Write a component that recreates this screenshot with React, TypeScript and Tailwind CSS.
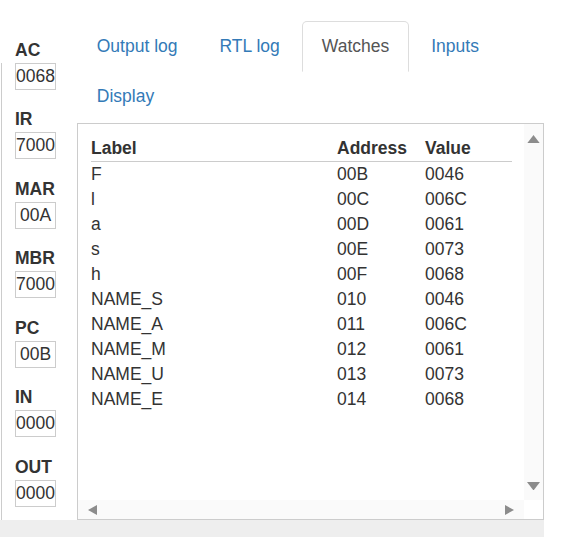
import React from "react"

const registers = [
  { name: "AC", value: "0068" },
  { name: "IR", value: "7000" },
  { name: "MAR", value: "00A" },
  { name: "MBR", value: "7000" },
  { name: "PC", value: "00B" },
  { name: "IN", value: "0000" },
  { name: "OUT", value: "0000" },
]

const tabs = ["Output log", "RTL log", "Watches", "Inputs", "Display"]

const watches = [
  ["F", "00B", "0046"],
  ["l", "00C", "006C"],
  ["a", "00D", "0061"],
  ["s", "00E", "0073"],
  ["h", "00F", "0068"],
  ["NAME_S", "010", "0046"],
  ["NAME_A", "011", "006C"],
  ["NAME_M", "012", "0061"],
  ["NAME_U", "013", "0073"],
  ["NAME_E", "014", "0068"],
]

function RegBox({ value }: { value: string }) {
  return (
    <div className="w-[41px] h-[27px] border border-[#cccccc] flex items-center justify-center leading-[25px]">
      {value}
    </div>
  )
}

function Arrow({ dir }: { dir: "up" | "down" | "left" | "right" }) {
  const pts = {
    up: "6.5,0 13,8.5 0,8.5",
    down: "0,0 13,0 6.5,8.5",
    left: "9,0 9,10 0,5",
    right: "0,0 9,5 0,10",
  }[dir]
  const vertical = dir === "up" || dir === "down"
  return (
    <svg width={vertical ? 13 : 9} height={vertical ? 8.5 : 10} viewBox={vertical ? "0 0 13 8.5" : "0 0 9 10"}>
      <polygon points={pts} fill="#8c8c8c" />
    </svg>
  )
}

export default function App() {
  return (
    <div
      className="w-[585px] h-[537px] bg-white text-[#333333] text-[17.5px] leading-[25px] flex flex-col"
      style={{ fontFamily: '"Liberation Sans", Arial, sans-serif' }}
    >
      <div className="flex h-[520px]">
        {/* registers */}
        <div className="w-[77px] flex flex-col pt-[37.7px]">
          <div className="pl-[15px] h-[25px] font-bold">{registers[0].name}</div>
          <div className="flex-1 ml-[1px] border-l border-[#cccccc] pl-[13px]">
            <RegBox value={registers[0].value} />
            {registers.slice(1).map((r) => (
              <div key={r.name} className="mt-[17.5px]">
                <div className="h-[25px] font-bold">{r.name}</div>
                <RegBox value={r.value} />
              </div>
            ))}
          </div>
        </div>

        {/* tabs + watches */}
        <div className="w-[467px] flex flex-col pt-[20.7px]">
          <ul className="flex flex-wrap">
            {tabs.map((t) => {
              const active = t === "Watches"
              return (
                <li key={t} className="mr-[2.5px] h-[50px]">
                  <div
                    className={
                      active
                        ? "h-[51px] px-[18.75px] py-[12.5px] border border-[#dddddd] border-b-transparent rounded-t-[5px] text-[#555555] bg-white"
                        : "h-[51px] px-[18.75px] py-[12.5px] border border-transparent rounded-t-[5px] text-[#337ab7]"
                    }
                  >
                    {t}
                  </div>
                </li>
              )
            })}
          </ul>

          <div className="mt-[2px] flex-1 border border-[#cccccc] flex flex-col">
            <div className="flex-1 flex">
              <div className="flex-1 pl-[13px] pr-[12px] pt-[12.5px]">
                <table className="w-full border-collapse">
                  <thead>
                    <tr className="border-b border-[#cccccc]">
                      <th className="w-[246px] text-left font-bold p-0 h-[25px]">Label</th>
                      <th className="w-[88px] text-left font-bold p-0">Address</th>
                      <th className="text-left font-bold p-0">Value</th>
                    </tr>
                  </thead>
                  <tbody>
                    {watches.map((w) => (
                      <tr key={w[0]} className="h-[25px]">
                        <td className="p-0">{w[0]}</td>
                        <td className="p-0">{w[1]}</td>
                        <td className="p-0">{w[2]}</td>
                      </tr>
                    ))}
                  </tbody>
                </table>
              </div>
              <div className="w-[19px] bg-[#fafafa] flex flex-col items-center justify-between pt-[11px] pb-[10px]">
                <Arrow dir="up" />
                <Arrow dir="down" />
              </div>
            </div>
            <div className="h-[19px] flex">
              <div className="flex-1 bg-[#fafafa] flex items-center justify-between pl-[10px] pr-[10px]">
                <Arrow dir="left" />
                <Arrow dir="right" />
              </div>
              <div className="w-[19px] bg-white" />
            </div>
          </div>
        </div>
      </div>
      <div className="w-[544px] flex-1 bg-[#eeeeee]" />
    </div>
  )
}
